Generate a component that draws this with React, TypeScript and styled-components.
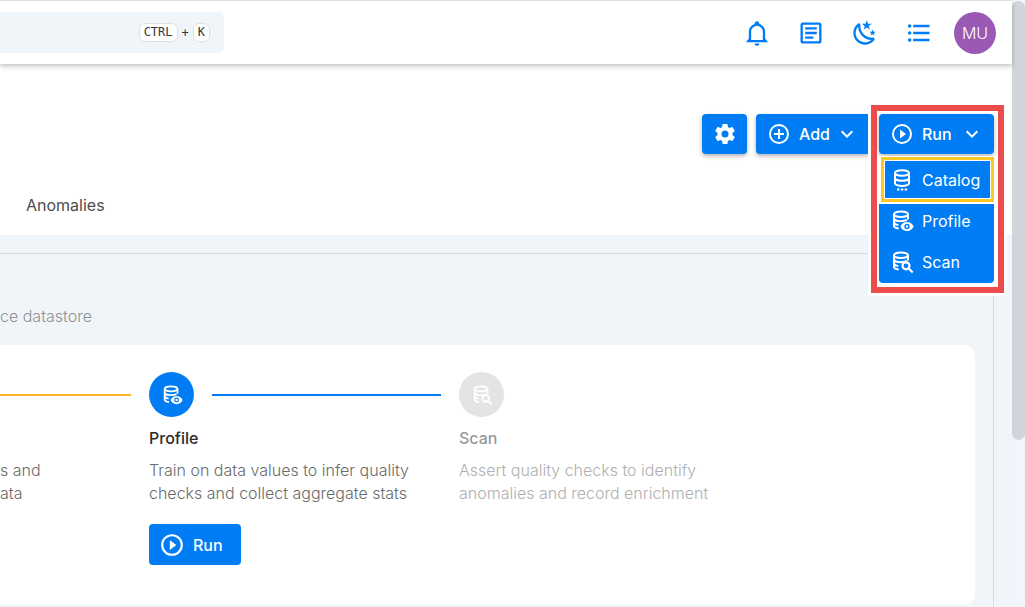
import React from 'react';
import styled, { createGlobalStyle, css } from 'styled-components';

const blue = '#007df5';
const sans = "Inter, 'Open Sans', sans-serif";

const GlobalStyle = createGlobalStyle`
  *, *::before, *::after { box-sizing: border-box; }
  html, body, #root { height: 100%; }
  body {
    margin: 0;
    overflow: hidden;
    background: #fff;
    color: #2b2b2b;
    font-family: ${sans};
    font-size: 16px;
  }
  button { font: inherit; cursor: pointer; }
  h2, p { margin: 0; }
`;

const paths = {
  bell: 'M10 21H14C14 22.1 13.1 23 12 23S10 22.1 10 21M21 19V20H3V19L5 17V11C5 7.9 7 5.2 10 4.3V4C10 2.9 10.9 2 12 2S14 2.9 14 4V4.3C17 5.2 19 7.9 19 11V17L21 19M17 11C17 8.2 14.8 6 12 6S7 8.2 7 11V18H17V11Z',
  notes: 'M5,3C3.89,3 3,3.89 3,5V19C3,20.11 3.89,21 5,21H19C20.11,21 21,20.11 21,19V5C21,3.89 20.11,3 19,3H5M5,5H19V19H5V5M7,7V9H17V7H7M7,11V13H17V11H7M7,15V17H14V15H7Z',
  night: 'M17.75,4.09L15.22,6.03L16.13,9.09L13.5,7.28L10.87,9.09L11.78,6.03L9.25,4.09L12.44,4L13.5,1L14.56,4L17.75,4.09M21.25,11L19.61,12.25L20.2,14.23L18.5,13.06L16.8,14.23L17.39,12.25L15.75,11L17.81,10.95L18.5,9L19.19,10.95L21.25,11M18.97,15.95C19.8,15.87 20.69,17.05 20.16,17.8C19.84,18.25 19.5,18.67 19.08,19.07C15.17,23 8.84,23 4.94,19.07C1.03,15.17 1.03,8.83 4.94,4.93C5.34,4.53 5.76,4.17 6.21,3.85C6.96,3.32 8.14,4.21 8.06,5.04C7.79,7.9 8.75,10.87 10.95,13.06C13.14,15.26 16.1,16.22 18.97,15.95M17.33,17.97C14.5,17.81 11.7,16.64 9.53,14.5C7.36,12.31 6.2,9.5 6.04,6.68C3.23,9.82 3.34,14.64 6.35,17.66C9.37,20.67 14.19,20.78 17.33,17.97Z',
  list: 'M7,5H21V7H7V5M7,13V11H21V13H7M4,4.5A1.5,1.5 0 0,1 5.5,6A1.5,1.5 0 0,1 4,7.5A1.5,1.5 0 0,1 2.5,6A1.5,1.5 0 0,1 4,4.5M4,10.5A1.5,1.5 0 0,1 5.5,12A1.5,1.5 0 0,1 4,13.5A1.5,1.5 0 0,1 2.5,12A1.5,1.5 0 0,1 4,10.5M7,19V17H21V19H7M4,16.5A1.5,1.5 0 0,1 5.5,18A1.5,1.5 0 0,1 4,19.5A1.5,1.5 0 0,1 2.5,18A1.5,1.5 0 0,1 4,16.5Z',
  cog: 'M12,15.5A3.5,3.5 0 0,1 8.5,12A3.5,3.5 0 0,1 12,8.5A3.5,3.5 0 0,1 15.5,12A3.5,3.5 0 0,1 12,15.5M19.43,12.97C19.47,12.65 19.5,12.33 19.5,12C19.5,11.67 19.47,11.34 19.43,11L21.54,9.37C21.73,9.22 21.78,8.95 21.66,8.73L19.66,5.27C19.54,5.05 19.27,4.96 19.05,5.05L16.56,6.05C16.04,5.66 15.5,5.32 14.87,5.07L14.5,2.42C14.46,2.18 14.25,2 14,2H10C9.75,2 9.54,2.18 9.5,2.42L9.13,5.07C8.5,5.32 7.96,5.66 7.44,6.05L4.95,5.05C4.73,4.96 4.46,5.05 4.34,5.27L2.34,8.73C2.21,8.95 2.27,9.22 2.46,9.37L4.57,11C4.53,11.34 4.5,11.67 4.5,12C4.5,12.33 4.53,12.65 4.57,12.97L2.46,14.63C2.27,14.78 2.21,15.05 2.34,15.27L4.34,18.73C4.46,18.95 4.73,19.03 4.95,18.95L7.44,17.94C7.96,18.34 8.5,18.68 9.13,18.93L9.5,21.58C9.54,21.82 9.75,22 10,22H14C14.25,22 14.46,21.82 14.5,21.58L14.87,18.93C15.5,18.67 16.04,18.34 16.56,17.94L19.05,18.95C19.27,19.03 19.54,18.95 19.66,18.73L21.66,15.27C21.78,15.05 21.73,14.78 21.54,14.63L19.43,12.97Z',
  plus: 'M12,20C7.59,20 4,16.41 4,12C4,7.59 7.59,4 12,4C16.41,4 20,7.59 20,12C20,16.41 16.41,20 12,20M12,2A10,10 0 0,0 2,12A10,10 0 0,0 12,22A10,10 0 0,0 22,12A10,10 0 0,0 12,2M13,7H11V11H7V13H11V17H13V13H17V11H13V7Z',
  play: 'M12,20C7.59,20 4,16.41 4,12C4,7.59 7.59,4 12,4C16.41,4 20,7.59 20,12C20,16.41 16.41,20 12,20M12,2A10,10 0 0,0 2,12A10,10 0 0,0 12,22A10,10 0 0,0 22,12A10,10 0 0,0 12,2M10,16.5L16,12L10,7.5V16.5Z',
  chevron: 'M7.41,8.58L12,13.17L16.59,8.58L18,10L12,16L6,10L7.41,8.58Z',
};

const Svg = styled.svg`
  display: block;
  flex: none;
`;

function Icon({ name, size = 24 }: { name: keyof typeof paths; size?: number }) {
  return (
    <Svg width={size} height={size} viewBox="0 0 24 24" fill="currentColor" aria-hidden="true">
      <path d={paths[name]} />
    </Svg>
  );
}

type DataKind = 'catalog' | 'profile' | 'scan';

function DataIcon({ kind, size = 24 }: { kind: DataKind; size?: number }) {
  return (
    <Svg width={size} height={size} viewBox="0 0 24 24" fill="none" stroke="currentColor" strokeWidth="2" aria-hidden="true">
      {kind === 'catalog' ? (
        <>
          <ellipse cx="12" cy="5" rx="7" ry="2.800" />
          <path d="M5 5v10.200c0 1.500 3.100 2.800 7 2.800s7-1.300 7-2.800V5M5 10c0 1.500 3.100 2.800 7 2.800s7-1.300 7-2.800" />
          <path d="M7 21.500h2.500M10.900 21.500h2.400M14.700 21.500h2.500" />
        </>
      ) : (
        <>
          <ellipse cx="11" cy="5.300" rx="7" ry="2.800" />
          <path d="M4 5.300v11.500c0 1.500 2 2.500 4.700 2.800M18 5.300v5.200M4 9.300c0 1.600 3.100 2.900 7 2.900 2.500 0 4.600-.5 5.900-1.300M4 13.200c0 1.400 1.800 2.400 4.400 2.800" />
          {kind === 'profile' ? (
            <path
              fill="currentColor"
              stroke="none"
              fillRule="evenodd"
              d="M17 13c-3 0-5.600 1.800-6.600 4.500 1 2.700 3.600 4.500 6.600 4.500s5.600-1.800 6.600-4.500c-1-2.700-3.600-4.500-6.600-4.500zM17 20.200a2.700 2.700 0 1 1 0-5.400 2.700 2.700 0 0 1 0 5.400zM17 16.200a1.300 1.300 0 1 0 0 2.600 1.300 1.300 0 0 0 0-2.600z"
            />
          ) : (
            <>
              <circle cx="16" cy="15.800" r="3.500" strokeWidth="2.200" />
              <path d="M18.500 18.300l4.200 4.200" strokeWidth="2.200" />
            </>
          )}
        </>
      )}
    </Svg>
  );
}

const Shell = styled.div`
  display: flex;
  min-height: 100%;
`;

const Page = styled.div`
  flex: 1;
  min-width: 0;
  display: flex;
  flex-direction: column;
`;

const ScrollTrack = styled.div`
  flex: none;
  width: 13px;
  padding-top: 1px;
  background: #f2f6fc;
`;

const ScrollThumb = styled.div`
  height: 439px;
  border-radius: 7px;
  background: #d1d5db;
`;

const Header = styled.header`
  display: flex;
  align-items: center;
  justify-content: space-between;
  height: 64px;
  padding-right: 16px;
  border-top: 1px solid #dfdfdf;
  box-shadow: 0 2px 5px rgba(0, 0, 0, 0.25);
  z-index: 1;
`;

const Search = styled.button`
  display: flex;
  align-items: center;
  justify-content: flex-end;
  gap: 4px;
  width: 224px;
  height: 41px;
  padding: 0 14px;
  border: 0;
  border-radius: 0 6px 6px 0;
  background: #f0f5fa;
  color: #333;
  font-family: 'DejaVu Sans Mono', monospace;
  font-size: 12px;
`;

const Key = styled.kbd`
  padding: 0 4px;
  border: 1px solid #e0e0e0;
  border-radius: 6px;
  background: #fff;
  font-family: inherit;
  font-size: 12px;
  line-height: 17px;
`;

const Tools = styled.nav`
  display: flex;
  align-items: center;
  gap: 26px;
`;

const ToolButton = styled.button`
  display: flex;
  padding: 0;
  border: 0;
  background: none;
  color: ${blue};
`;

const Avatar = styled.button`
  width: 42px;
  height: 42px;
  margin-left: -5px;
  padding: 0;
  border: 0;
  border-radius: 50%;
  background: #9b59b6;
  color: #fff;
  font-weight: 300;
`;

const Top = styled.section`
  display: flex;
  flex-direction: column;
  justify-content: space-between;
  height: 171px;
  padding: 50px 18px 20px 0;
`;

const Actions = styled.div`
  display: flex;
  justify-content: flex-end;
  gap: 9px;
`;

const Button = styled.button<{ $square?: boolean; $flat?: boolean }>`
  display: flex;
  align-items: center;
  justify-content: ${(p) => (p.$square ? 'center' : 'flex-start')};
  gap: 8px;
  height: 40px;
  width: ${(p) => (p.$square ? '45px' : 'auto')};
  padding: 0 ${(p) => (p.$square ? 0 : 11)}px;
  border: 0;
  border-radius: 4px;
  background: ${blue};
  color: #fff;
  font-weight: 500;
  ${(p) =>
    !p.$flat &&
    css`
      box-shadow: 0 2px 4px rgba(0, 0, 0, 0.3);
    `}
`;

const Caret = styled.span`
  margin-left: -3px;
`;

const RunSlot = styled.div`
  position: relative;
  width: 115px;
`;

const Callout = styled.div`
  position: absolute;
  z-index: 2;
  top: -9px;
  left: -8px;
  right: -10px;
  padding: 3px 4px 4px 2px;
  border: 6px solid #ed4c4c;
  outline: 3px solid #fff;
  background: #fff;
`;

const RunTrigger = styled(Button)`
  width: 100%;
`;

const Menu = styled.ul`
  margin: 2px 0 0;
  padding: 5px 0 1px;
  list-style: none;
  border-radius: 0 0 4px 4px;
  background: ${blue};
  overflow: hidden;
`;

const MenuItem = styled.button<{ $marked?: boolean }>`
  display: flex;
  align-items: center;
  gap: 8px;
  width: 100%;
  height: 41px;
  padding: 0 11px;
  border: 0;
  background: none;
  color: #fff;
  ${(p) =>
    p.$marked &&
    css`
      position: relative;
      width: auto;
      height: 37px;
      margin: 0 6px 2px;
      padding: 0 10px 0 5px;
      box-shadow: 0 0 0 1px #fff, 0 0 0 4px #fbc926, 0 0 0 6px #fff;
    `}
`;

const Tab = styled.a`
  align-self: flex-start;
  margin-left: 26px;
  color: #4d4d4d;
  line-height: 20px;
  text-decoration: none;
`;

const Body = styled.main`
  flex: 1;
  padding: 18px 18px 0 0;
  background: #f0f5fa;
`;

const Panel = styled.section`
  height: 100%;
  padding: 51px 18px 0 0;
  border-top: 1px solid #d6dbe0;
  border-right: 1px solid #d6dbe0;
`;

const Lead = styled.p`
  color: #8f9194;
  font-weight: 300;
  line-height: 22px;
`;

const Card = styled.div`
  display: grid;
  grid-template-columns: 149px 310px minmax(0, 1fr);
  margin-top: 18px;
  padding: 27px 0 40px;
  border-radius: 0 10px 10px 0;
  background: #fff;
`;

const Step = styled.article<{ $off?: boolean }>`
  color: ${(p) => (p.$off ? '#b0b0b0' : '#6b6b6b')};
  h2 { color: ${(p) => (p.$off ? '#999' : '#2b2b2b')}; }
`;

const StepHead = styled.div`
  display: flex;
  align-items: center;
  gap: 18px;
  height: 45px;
  padding-right: 18px;
`;

const Badge = styled.span<{ $off?: boolean }>`
  display: flex;
  align-items: center;
  justify-content: center;
  flex: none;
  width: 45px;
  height: 45px;
  border-radius: 50%;
  background: ${(p) => (p.$off ? '#e4e4e4' : blue)};
  color: #fff;
`;

const Connector = styled.span<{ $color: string }>`
  flex: 1;
  height: 2px;
  background: ${(p) => p.$color};
`;

const StepTitle = styled.h2`
  min-height: 22px;
  margin-top: 10px;
  font-size: 16px;
  font-weight: 500;
  line-height: 22px;
`;

const StepText = styled.p`
  margin: 10px 0 19px;
  font-weight: 300;
  line-height: 23px;
  white-space: pre-line;
`;

const StepRun = styled(Button)`
  height: 41px;
  padding: 0 18px 0 10px;
`;

export default function App() {
  return (
    <Shell>
      <GlobalStyle />
      <Page>
        <Header>
          <Search aria-label="Search">
            <Key>CTRL</Key>+<Key>K</Key>
          </Search>
          <Tools>
            <ToolButton aria-label="Notifications"><Icon name="bell" size={28} /></ToolButton>
            <ToolButton aria-label="Notes"><Icon name="notes" size={28} /></ToolButton>
            <ToolButton aria-label="Dark mode"><Icon name="night" size={28} /></ToolButton>
            <ToolButton aria-label="Activity"><Icon name="list" size={28} /></ToolButton>
            <Avatar>MU</Avatar>
          </Tools>
        </Header>

        <Top>
          <Actions>
            <Button $square aria-label="Settings"><Icon name="cog" /></Button>
            <Button><Icon name="plus" />Add<Caret><Icon name="chevron" /></Caret></Button>
            <RunSlot>
              <Callout>
                <RunTrigger aria-expanded="true"><Icon name="play" />Run<Icon name="chevron" /></RunTrigger>
                <Menu>
                  <li><MenuItem $marked><DataIcon kind="catalog" />Catalog</MenuItem></li>
                  <li><MenuItem><DataIcon kind="profile" />Profile</MenuItem></li>
                  <li><MenuItem><DataIcon kind="scan" />Scan</MenuItem></li>
                </Menu>
              </Callout>
            </RunSlot>
          </Actions>
          <Tab href="#anomalies">Anomalies</Tab>
        </Top>

        <Body>
          <Panel>
            <Lead>ce datastore</Lead>
            <Card>
              <Step>
                <StepHead><Connector $color="#fdb52b" /></StepHead>
                <StepTitle as="div" />
                <StepText>{'s and\nata'}</StepText>
              </Step>
              <Step>
                <StepHead>
                  <Badge><DataIcon kind="profile" size={22} /></Badge>
                  <Connector $color={blue} />
                </StepHead>
                <StepTitle>Profile</StepTitle>
                <StepText>{'Train on data values to infer quality\nchecks and collect aggregate stats'}</StepText>
                <StepRun $flat><Icon name="play" size={26} />Run</StepRun>
              </Step>
              <Step $off>
                <StepHead><Badge $off><DataIcon kind="scan" size={22} /></Badge></StepHead>
                <StepTitle>Scan</StepTitle>
                <StepText>{'Assert quality checks to identify\nanomalies and record enrichment'}</StepText>
              </Step>
            </Card>
          </Panel>
        </Body>
      </Page>
      <ScrollTrack aria-hidden="true"><ScrollThumb /></ScrollTrack>
    </Shell>
  );
}
